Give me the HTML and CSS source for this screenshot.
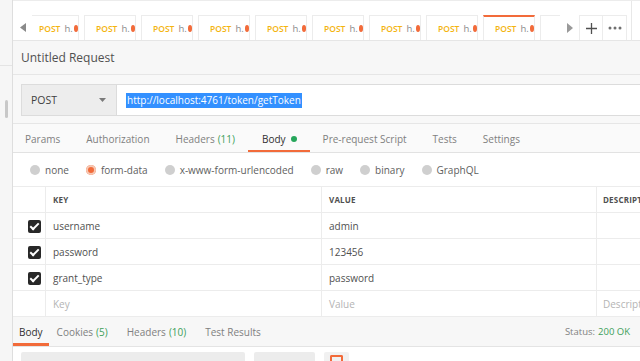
FILE: index.html
```html
<!DOCTYPE html>
<html>
<head>
<meta charset="utf-8">
<link rel="stylesheet" href="styles.css">
</head>
<body>
<div class="app">
  <aside class="sidebar">
    <div class="sb-head"></div>
    <div class="sb-thumb"></div>
  </aside>
  <main class="main">
    <div class="tabbar">
      <div class="nav-arrow left"><svg width="6" height="9" viewBox="0 0 6 9"><path d="M6 0 L0 4.5 L6 9 Z" fill="#8a8a8a"/></svg></div>
      <div class="strip">
        <div class="strip-inner">
          <div class="tab"><span class="m">POST</span><span class="u">h.</span><span class="dot"></span></div>
          <div class="tab"><span class="m">POST</span><span class="u">h.</span><span class="dot"></span></div>
          <div class="tab"><span class="m">POST</span><span class="u">h.</span><span class="dot"></span></div>
          <div class="tab"><span class="m">POST</span><span class="u">h.</span><span class="dot"></span></div>
          <div class="tab"><span class="m">POST</span><span class="u">h.</span><span class="dot"></span></div>
          <div class="tab"><span class="m">POST</span><span class="u">h.</span><span class="dot"></span></div>
          <div class="tab"><span class="m">POST</span><span class="u">h.</span><span class="dot"></span></div>
          <div class="tab"><span class="m">POST</span><span class="u">h.</span><span class="dot"></span></div>
          <div class="tab active"><span class="m">POST</span><span class="u">h.</span><span class="dot"></span></div>
          <div class="tab"></div>
        </div>
      </div>
      <div class="nav-arrow right"><svg width="6" height="10" viewBox="0 0 6 10"><path d="M0 0 L6 5 L0 10 Z" fill="#9a9a9a"/></svg></div>
      <div class="tbtn"><svg width="11" height="11" viewBox="0 0 11 11"><path d="M5.5 0 V11 M0 5.5 H11" stroke="#505050" stroke-width="1.3"/></svg></div>
      <div class="tbtn"><svg width="14" height="4" viewBox="0 0 14 4"><circle cx="2" cy="2" r="1.5" fill="#707070"/><circle cx="7" cy="2" r="1.5" fill="#707070"/><circle cx="12" cy="2" r="1.5" fill="#707070"/></svg></div>
      <div class="tb-gap"></div>
      <div class="tb-rest"></div>
    </div>

    <div class="titlebar">Untitled Request</div>

    <div class="request">
      <div class="urlrow">
        <div class="method"><span>POST</span><svg width="7" height="4" viewBox="0 0 7 4"><path d="M0 0 H7 L3.5 4 Z" fill="#7a7a7a"/></svg></div>
        <div class="url"><span class="sel">http://localhost:4761/token/getToken</span></div>
      </div>
      <nav class="reqtabs">
        <span class="rt">Params</span>
        <span class="rt">Authorization</span>
        <span class="rt">Headers <em>(11)</em></span>
        <span class="rt on">Body <i class="gdot"></i></span>
        <span class="rt">Pre-request Script</span>
        <span class="rt">Tests</span>
        <span class="rt">Settings</span>
      </nav>
    </div>

    <div class="bodypane">
      <div class="radios">
        <label class="r"><i class="rc"></i>none</label>
        <label class="r"><i class="rc sel"></i>form-data</label>
        <label class="r"><i class="rc"></i>x-www-form-urlencoded</label>
        <label class="r"><i class="rc"></i>raw</label>
        <label class="r"><i class="rc"></i>binary</label>
        <label class="r"><i class="rc"></i>GraphQL</label>
      </div>
      <div class="kv">
        <div class="row head">
          <div class="c chk"></div><div class="c key">KEY</div><div class="c val">VALUE</div><div class="c desc">DESCRIPTION</div>
        </div>
        <div class="row">
          <div class="c chk"><span class="cb"></span></div><div class="c key">username</div><div class="c val">admin</div><div class="c desc"></div>
        </div>
        <div class="row">
          <div class="c chk"><span class="cb"></span></div><div class="c key">password</div><div class="c val">123456</div><div class="c desc"></div>
        </div>
        <div class="row">
          <div class="c chk"><span class="cb"></span></div><div class="c key">grant_type</div><div class="c val">password</div><div class="c desc"></div>
        </div>
        <div class="row ph">
          <div class="c chk"></div><div class="c key">Key</div><div class="c val">Value</div><div class="c desc">Description</div>
        </div>
      </div>
    </div>

    <div class="resptabs">
      <span class="pt on">Body</span>
      <span class="pt">Cookies <em>(5)</em></span>
      <span class="pt">Headers <em>(10)</em></span>
      <span class="pt">Test Results</span>
      <span class="status">Status: <em>200 OK</em></span>
    </div>
    <div class="resptools">
      <div class="tool t1"></div>
      <div class="tool t2"></div>
      <div class="tool t3"><span></span></div>
    </div>
  </main>
</div>
</body>
</html>
```

FILE: styles.css
```css
* { box-sizing: border-box; }
html, body { margin: 0; padding: 0; }
body {
  width: 640px; height: 361px; overflow: hidden;
  font-family: "Open Sans", "Liberation Sans", sans-serif;
  font-size: 10px; color: #505050; background: #fff;
}
.app { display: flex; height: 361px; }

.sidebar {
  width: 13px; flex: none; background: #f6f6f6;
  border-right: 1px solid #dedede;
  display: flex; flex-direction: column; align-items: center;
}
.sb-head { width: 100%; height: 66px; border-bottom: 1px solid #e4e4e4; }
.sb-thumb { width: 3px; height: 18px; background: #c8c8c8; border-radius: 2px; margin-top: 34px; }

.main { flex: 1; min-width: 0; display: flex; flex-direction: column; overflow: hidden; }

.tabbar {
  height: 41px; flex: none; display: flex; align-items: flex-end; padding-top: 15px;
  border-top: 1px solid #ececec; background: #fff; border-bottom: 1px solid #e6e6e6;
}
.nav-arrow { width: 19px; height: 25px; display: flex; align-items: center; justify-content: center; flex: none; }
.nav-arrow.right { width: 19px; background: #fff; }
.strip { width: 528px; flex: none; overflow: hidden; height: 25px; }
.strip-inner { display: flex; gap: 5px; margin-left: -5px; }
.tab {
  width: 52px; height: 25px; flex: none;
  border: 1px solid #ececec; border-bottom: none; background: #fff;
  display: flex; align-items: center; padding-left: 11px; padding-top: 1px;
  font-size: 9px;
}
.tab.active { border-top: 2px solid #f26b3a; padding-top: 0; }
.tab .m { color: #f4b40f; font-weight: 600; font-size: 8.5px; }
.tab .u { color: #8a8a8a; margin-left: 4px; font-size: 9.5px; }
.tab .dot { width: 7px; height: 7px; border-radius: 50%; background: #f26b3a; margin-left: 1px; }
.tbtn {
  width: 24px; height: 25px; flex: none; border: 1px solid #ececec; border-bottom: none;
  display: flex; align-items: center; justify-content: center; background: #fff;
}
.tbtn + .tbtn { border-left: none; }
.tb-gap { width: 5px; height: 40px; flex: none; border-right: 1px solid #e8e8e8; align-self: flex-end; margin-bottom: -1px; }
.tb-rest { flex: 1; }

.titlebar {
  height: 34px; flex: none; background: #f7f7f7; border-bottom: 1px solid #e6e6e6;
  display: flex; align-items: center; padding-left: 8px;
  font-size: 12px; color: #505050; font-weight: 500;
}

.request { background: #f8f8f8; padding-top: 9px; flex: none; }
.urlrow { display: flex; height: 32px; margin-left: 8px; }
.method {
  width: 96px; flex: none; background: #ededed; border: 1px solid #dcdcdc;
  display: flex; align-items: center; justify-content: space-between;
  padding: 0 10px 0 9px; font-size: 10.5px; color: #404040;
}
.url {
  flex: 1; background: #fff; border: 1px solid #dcdcdc; border-left: none; border-right: none;
  display: flex; align-items: center; padding-left: 9px; font-size: 10px;
}
.url .sel { background: #3390ff; color: #fff; line-height: 15px; padding: 0 1px; }
.reqtabs {
  display: flex; height: 37px; flex: none; align-items: stretch; padding-left: 0;
  border-top: 7px solid #f8f8f8; border-bottom: 1px solid #e2e2e2; background: #fafafa;
  box-shadow: inset 0 1px 0 #e6e6e6;
}
.rt {
  display: flex; align-items: center; padding: 5px 13px 0 13px;
  font-size: 10px; color: #808080; border-bottom: 2px solid transparent;
}
.rt:first-child { padding-left: 12px; }
.rt em, .pt em { font-style: normal; color: #3d9f5a; margin-left: 3px; }
.rt.on { color: #303030; border-bottom-color: #f26b3a; padding-left: 14px; }
.gdot { width: 6px; height: 6px; border-radius: 50%; background: #26a65b; margin-left: 5px; display: inline-block; }

.bodypane { flex: none; background: #fff; }
.radios { height: 34px; display: flex; align-items: center; padding-left: 17px; gap: 17px; border-bottom: 1px solid #ececec; padding-top: 1px; }
.r { display: flex; align-items: center; font-size: 10px; color: #606060; }
.rc { width: 10px; height: 10px; border-radius: 50%; background: #cfcfcf; margin-right: 5px; display: inline-block; }
.rc.sel { background: #f26b3a; box-shadow: inset 0 0 0 2px #f6c8b4; }

.kv { display: flex; flex-direction: column; }
.row { display: flex; height: 26px; border-bottom: 1px solid #ececec; }
.c { flex: none; display: flex; align-items: center; padding-left: 7px; font-size: 10px; color: #505050; border-right: 1px solid #ececec; }
.c.chk { width: 33px; justify-content: flex-end; padding: 2px 4px 0 0; }
.c.key { width: 276px; }
.c.val { width: 275px; }
.c.desc { width: 60px; border-right: none; padding-left: 6px; white-space: nowrap; overflow: hidden; }
.row.head .c { font-size: 8px; font-weight: 700; color: #505050; letter-spacing: 0.2px; }
.row.ph .c { color: #b4b4b4; }
.cb {
  width: 13px; height: 13px; background: #282828; border-radius: 2px; position: relative; display: inline-block;
}
.cb::after {
  content: ""; position: absolute; left: 4px; top: 1px; width: 3px; height: 7px;
  border: solid #fff; border-width: 0 2px 2px 0; transform: rotate(45deg);
}

.resptabs {
  height: 30px; flex: none; display: flex; align-items: stretch; background: #f7f7f7;
  border-bottom: 1px solid #e4e4e4; padding-right: 10px;
}
.pt { display: flex; align-items: center; font-size: 10px; color: #808080; margin-right: 19px; }
.pt.on { color: #303030; padding: 3px 6px 0; border-bottom: 3px solid #f26b3a; margin-right: 8px; }
.status { margin-left: auto; display: flex; align-items: center; font-size: 9.5px; color: #808080; }
.status em { font-style: normal; color: #3d9f5a; margin-left: 3px; }

.resptools { flex: 1; display: flex; gap: 9px; padding: 5px 0 0 8px; background: #fff; }
.tool { height: 20px; background: #ececec; border-radius: 2px; }
.t1 { width: 224px; }
.t2 { width: 61px; }
.t3 { width: 25px; background: #f1f1f1; display: flex; justify-content: center; padding-top: 3px; }
.t3 span { width: 13px; height: 8px; border: 2px solid #f26b3a; border-bottom: none; border-radius: 2px 2px 0 0; }
```
